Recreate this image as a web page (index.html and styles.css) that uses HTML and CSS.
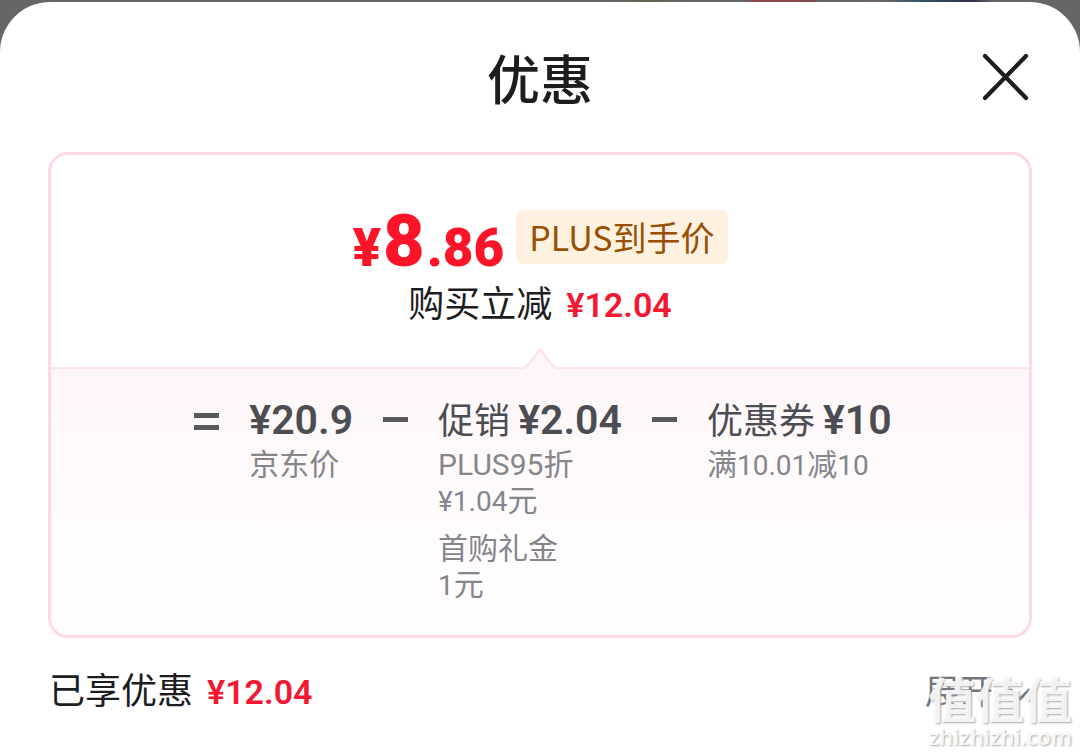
FILE: index.html
```html
<!DOCTYPE html>
<html lang="zh-CN">
	<head>
		<meta charset="UTF-8" />
		<meta name="viewport" content="width=device-width, initial-scale=1.0" />
		<title>优惠</title>
		<link rel="stylesheet" href="styles.css">
	</head>
	<body>
		<main class="sheet">
			<header class="header">
				<h1 class="title">优惠</h1>
				<button type="button" class="close" aria-label="关闭">
					<svg width="50" height="50" viewBox="0 0 50 50" fill="none" stroke="#1c1d1f" stroke-width="4.2" stroke-linecap="round">
						<path d="M3 4 L44 46 M44 4 L3 46" />
					</svg>
				</button>
			</header>

			<section class="card">
				<div class="summary">
					<div class="price-row">
						<div class="price">¥<span class="price-int">8</span>.86</div>
						<span class="badge">PLUS到手价</span>
					</div>
					<div class="saved">购买立减<span class="amount">¥12.04</span></div>
				</div>
				<div class="detail">
					<svg class="arrow" width="34" height="24" viewBox="0 0 34 24">
						<path d="M0 24 L3 21 Q5 20 6 18 L17 3 L28 18 Q29 20 31 21 L34 24 Z" fill="#fff6f8" />
						<path d="M2 21 Q4 20 6 18 L17 3 L28 18 Q30 20 32 21" fill="none" stroke="#fee4eb" stroke-width="2.5" />
					</svg>
					<span class="op equals"></span>
					<div class="item">
						<div class="item-price"><b>¥20.9</b></div>
						<p>京东价</p>
					</div>
					<span class="op minus"></span>
					<div class="item">
						<div class="item-price"><span>促销</span><b>¥2.04</b></div>
						<p>PLUS95折<br><span class="num">¥1.04</span>元</p>
						<p>首购礼金<br><span class="num">1</span>元</p>
					</div>
					<span class="op minus"></span>
					<div class="item">
						<div class="item-price"><span>优惠券</span><b>¥10</b></div>
						<p>满<span class="num">10.01</span>减<span class="num">10</span></p>
					</div>
				</div>
			</section>

			<div class="footer">
				<div>已享优惠<span class="amount">¥12.04</span></div>
				<button type="button" class="expand">
					展开
					<svg width="24" height="20" viewBox="0 0 24 20" fill="none" stroke="#74767b" stroke-width="3" stroke-linecap="round">
						<path d="M3 8 L12 17 L21 8" />
					</svg>
				</button>
			</div>
		</main>

		<div class="watermark">
			<div class="watermark-name">值值值</div>
			<div class="watermark-url">zhizhizhi.com</div>
		</div>
	</body>
</html>
```
FILE: styles.css
```css
* {
	box-sizing: border-box;
}
/* page behind the sheet, only a thin strip shows */
body {
	margin: 0;
	padding-top: 2px;
	min-height: 100vh;
	display: flex;
	background: linear-gradient(90deg, #666 56%, #60664e 60%, #666 64%, #666 69%, #84454b 70%, #84454b 75%, #666 76%, #706465 82%, #345566 85%, #30304c 90%, #666 92%);
	color: #1c1d1f;
	font-family: Roboto, "Noto Sans CJK SC", sans-serif;
	font-size: 36px;
	line-height: 48px;
}
button {
	padding: 0;
	border: 0;
	background: none;
	font: inherit;
	cursor: pointer;
}
.sheet {
	flex: 1;
	padding: 0 48px;
	background: white;
	border-radius: 50px 50px 0 0;
}
.header {
	display: grid;
	grid-template-columns: 50px 1fr 50px;
	align-items: center;
	height: 150px;
}
.title {
	grid-column: 2;
	margin: 0;
	text-align: center;
	font-family: "Noto Sans CJK SC", sans-serif;
	font-size: 53px;
	font-weight: 500;
	line-height: 64px;
}
.close {
	height: 50px;
}
.close svg {
	display: block;
}
.card {
	border: 3px solid #fdd9e3;
	border-radius: 20px;
	overflow: hidden;
}
.summary {
	display: flex;
	flex-direction: column;
	align-items: center;
	padding: 55px 20px 38px;
}
.price-row {
	display: flex;
	align-items: flex-start;
	gap: 12px;
}
.price {
	color: #fc1528;
	font-size: 53px;
	font-weight: 900;
	line-height: 76px;
}
.price-int {
	margin: 0 2px;
	font-size: 72px;
	line-height: 54px;
}
.badge {
	padding: 0 13px;
	border-radius: 6px;
	background: #fff1df;
	color: #964f04;
	font-family: "Noto Sans CJK SC", sans-serif;
	font-size: 34px;
	line-height: 54px;
}
.saved {
	margin-top: -5px;
}
.amount {
	margin-left: 14px;
	color: #f21732;
	font-size: 34px;
	font-weight: 600;
	line-height: 36px;
}
.detail {
	position: relative;
	display: flex;
	justify-content: center;
	gap: 30px;
	padding: 28px 20px 20px 26px;
	border-top: 2px solid #fee4eb;
	background: linear-gradient(#fff6f8, #fffcfd 60%, #fffcfd);
}
.arrow {
	position: absolute;
	top: -23px;
	left: 50%;
	margin-left: -17px;
}
.op {
	width: 25px;
	margin-top: 20px;
	border-top: 5px solid #58595f;
}
.equals {
	height: 17px;
	margin-top: 16px;
	border-bottom: 5px solid #58595f;
}
.item {
	color: #85868c;
	font-size: 30px;
	line-height: 36px;
}
.item-price {
	color: #4b4d53;
	font-size: 36px;
	line-height: 50px;
}
.item-price b {
	font-size: 41px;
	font-weight: 600;
	line-height: 36px;
}
.item-price span {
	margin-right: 8px;
}
.item p {
	margin: 0 0 12px;
}
.num {
	font-size: 28px;
	line-height: 30px;
}
.footer {
	display: flex;
	justify-content: space-between;
	padding: 30px 0 38px 1px;
}
.expand {
	display: flex;
	align-items: center;
	gap: 15px;
	color: #74767b;
	font-size: 34px;
}
.watermark {
	position: absolute;
	right: 8px;
	bottom: 5px;
	color: rgba(255, 255, 255, 0.85);
	font-family: "Noto Sans CJK SC", sans-serif;
	font-weight: 700;
	text-align: right;
	text-shadow: 1px 1px 2px #aaa;
	pointer-events: none;
}
.watermark-name {
	font-size: 48px;
	line-height: 52px;
}
.watermark-url {
	font-family: "Open Sans", sans-serif;
	font-size: 22px;
	line-height: 26px;
	font-weight: 600;
}
```
